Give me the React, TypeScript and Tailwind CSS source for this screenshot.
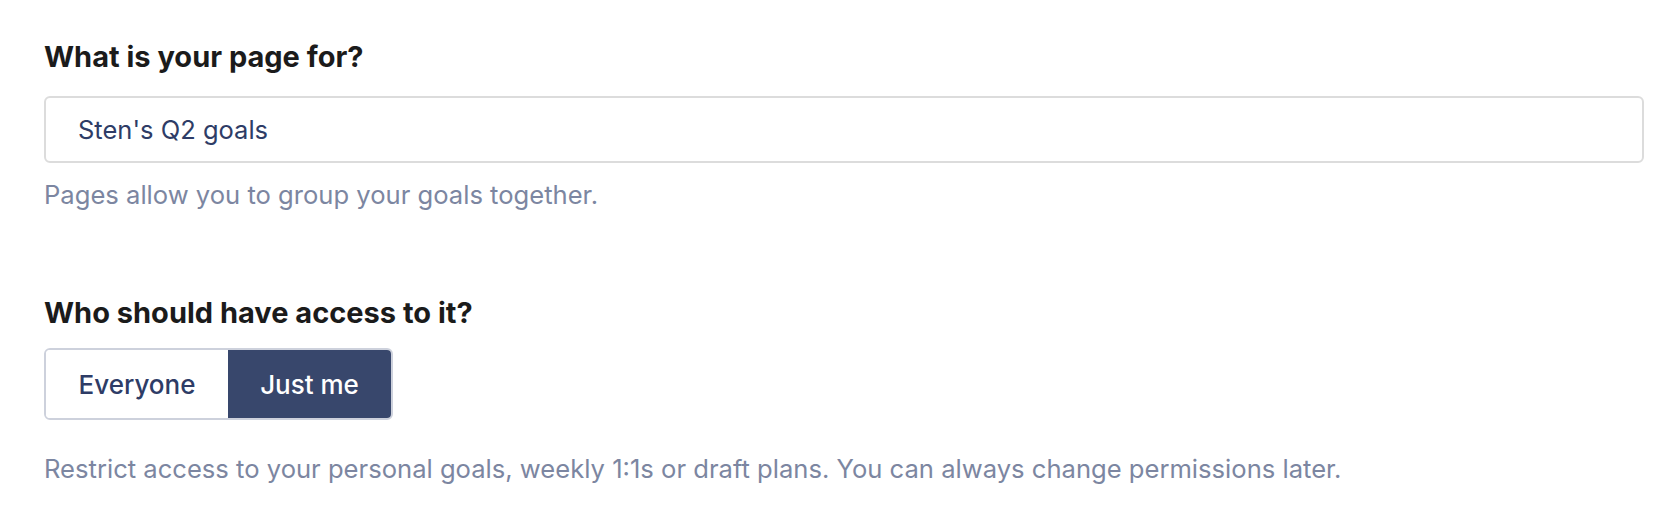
import React, { useState } from 'react';

type Access = 'everyone' | 'me';

export default function App() {
  const [name, setName] = useState("Sten's Q2 goals");
  const [access, setAccess] = useState<Access>('me');

  return (
    <div className="min-h-[520px] w-full bg-white pl-[44px] pr-[36px] pt-[41px] font-['Inter',sans-serif]">
      <label className="block text-[29px] font-bold leading-[32px] text-[#1b1b1b]">
        What is your page for?
      </label>
      <input
        value={name}
        onChange={(e) => setName(e.target.value)}
        className="mt-[23px] block h-[67px] w-[1600px] rounded-[6px] border-2 border-[#dcdcdc] bg-white pl-8 text-[25.5px] text-[#2e3c66] outline-none"
      />
      <p className="mt-4 text-[25.6px] leading-[32px] text-[#7c86a1]">
        Pages allow you to group your goals together.
      </p>

      <label className="mt-[86px] block text-[29px] font-bold leading-[32px] text-[#1b1b1b]">
        Who should have access to it?
      </label>
      <div className="mt-[19px] inline-flex h-[72px] overflow-hidden rounded-[6px] border-2 border-[#cdd1dc]">
        <button
          onClick={() => setAccess('everyone')}
          className={`w-[182px] text-[26px] font-medium ${
            access === 'everyone' ? 'bg-[#38476c] text-white' : 'bg-white text-[#2e3c66]'
          }`}
        >
          Everyone
        </button>
        <button
          onClick={() => setAccess('me')}
          className={`w-[163px] text-[26px] font-medium ${
            access === 'me' ? 'bg-[#38476c] text-white' : 'bg-white text-[#2e3c66]'
          }`}
        >
          Just me
        </button>
      </div>
      <p className="mt-[33px] text-[25.6px] leading-[32px] text-[#7c86a1]">
        Restrict access to your personal goals, weekly 1:1s or draft plans. You can always change permissions later.
      </p>
    </div>
  );
}
